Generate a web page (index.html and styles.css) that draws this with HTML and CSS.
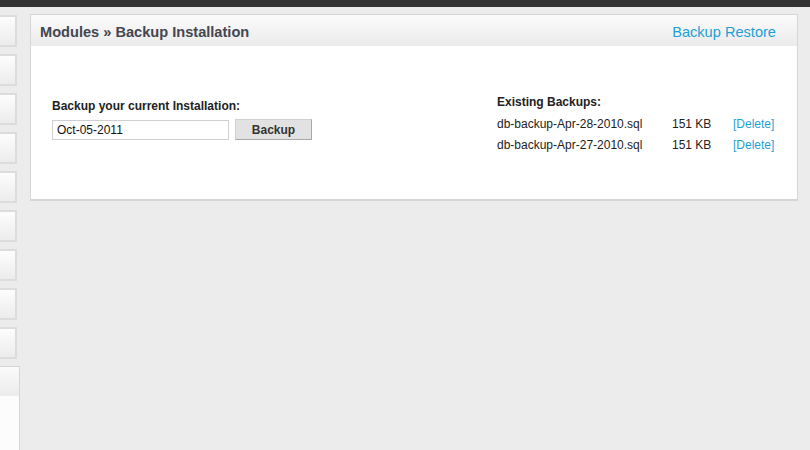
FILE: index.html
```html
<!DOCTYPE html>
<html>
<head>
<meta charset="utf-8">
<link rel="stylesheet" href="styles.css">
</head>
<body>
<div class="topbar"></div>
<div class="layout">
  <div class="sidebar">
    <div class="side-item"></div>
    <div class="side-item"></div>
    <div class="side-item"></div>
    <div class="side-item"></div>
    <div class="side-item"></div>
    <div class="side-item"></div>
    <div class="side-item"></div>
    <div class="side-item"></div>
    <div class="side-item"></div>
    <div class="side-open"><div class="side-open-head"></div></div>
  </div>
  <div class="panel">
    <div class="panel-head">
      <div class="panel-title">Modules » Backup Installation</div>
      <a class="panel-link" href="#">Backup Restore</a>
    </div>
    <div class="panel-body">
      <div class="backup-form">
        <div class="label">Backup your current Installation:</div>
        <div class="form-row">
          <input class="text-input" type="text" value="Oct-05-2011">
          <button class="btn">Backup</button>
        </div>
      </div>
      <div class="backup-list">
        <div class="label">Existing Backups:</div>
        <div class="list-grid">
          <span>db-backup-Apr-28-2010.sql</span><span>151 KB</span><a href="#">[Delete]</a>
          <span>db-backup-Apr-27-2010.sql</span><span>151 KB</span><a href="#">[Delete]</a>
        </div>
      </div>
    </div>
  </div>
</div>
</body>
</html>
```

FILE: styles.css
```css
html, body {
  margin: 0;
  padding: 0;
  height: 100%;
}
body {
  background: #ebeceb;
  font-family: "Liberation Sans", Arial, sans-serif;
  color: #222;
  overflow: hidden;
}
.topbar {
  height: 7px;
  background: #333333;
}
.layout {
  display: flex;
  align-items: flex-start;
  height: 443px;
}
.sidebar {
  width: 20px;
  height: 100%;
  display: flex;
  flex-direction: column;
  gap: 7px;
  padding-top: 8px;
  box-sizing: border-box;
}
.side-item {
  width: 17px;
  height: 32px;
  box-sizing: border-box;
  border: 2px solid #dcdcdc;
  border-left: none;
  background: linear-gradient(#fdfdfd, #ececec);
}
.side-open {
  flex: 1;
  width: 20px;
  box-sizing: border-box;
  border: 1px solid #d6d6d6;
  border-left: none;
  border-bottom: none;
  background: #fcfcfc;
}
.side-open-head {
  height: 29px;
  background: linear-gradient(#fafafa, #ececec);
}
.panel {
  margin-left: 10px;
  margin-top: 7px;
  width: 768px;
  box-sizing: border-box;
  border: 1px solid #d6d6d6;
  border-bottom-width: 2px;
  background: #fff;
}
.panel-head {
  height: 31px;
  display: flex;
  align-items: center;
  justify-content: space-between;
  padding: 2px 21px 0 9px;
  box-sizing: border-box;
  background: linear-gradient(#fbfbfb, #ebebeb);
}
.panel-title {
  font-size: 14.6px;
  font-weight: bold;
  color: #444650;
}
.panel-link {
  font-size: 14.6px;
  color: #1f9fd6;
  text-decoration: none;
}
.panel-body {
  display: flex;
  padding: 49px 21px 40px 21px;
  height: 153px;
  box-sizing: border-box;
}
.backup-form {
  width: 445px;
  padding-top: 4px;
}
.label {
  font-size: 12px;
  font-weight: bold;
  color: #222;
}
.form-row {
  display: flex;
  align-items: center;
  gap: 6px;
  margin-top: 6px;
}
.text-input {
  width: 177px;
  height: 20px;
  box-sizing: border-box;
  border: 1px solid #cfcfcf;
  padding: 0 4px;
  font-family: "Liberation Sans", Arial, sans-serif;
  font-size: 12px;
  color: #111;
  outline: none;
}
.btn {
  width: 77px;
  height: 21px;
  box-sizing: border-box;
  border: 1px solid;
  border-color: #d0d0d0 #a8a8a8 #a8a8a8 #d0d0d0;
  background: #e2e2e2;
  font-family: "Liberation Sans", Arial, sans-serif;
  font-size: 12px;
  font-weight: bold;
  color: #333;
  padding: 0;
}
.backup-list {
  flex: 1;
}
.list-grid {
  display: grid;
  grid-template-columns: 175px 61px auto;
  row-gap: 7px;
  margin-top: 8px;
  font-size: 12px;
  line-height: 14px;
  color: #222;
}
.list-grid a {
  color: #1f9fd6;
  text-decoration: none;
}
```
